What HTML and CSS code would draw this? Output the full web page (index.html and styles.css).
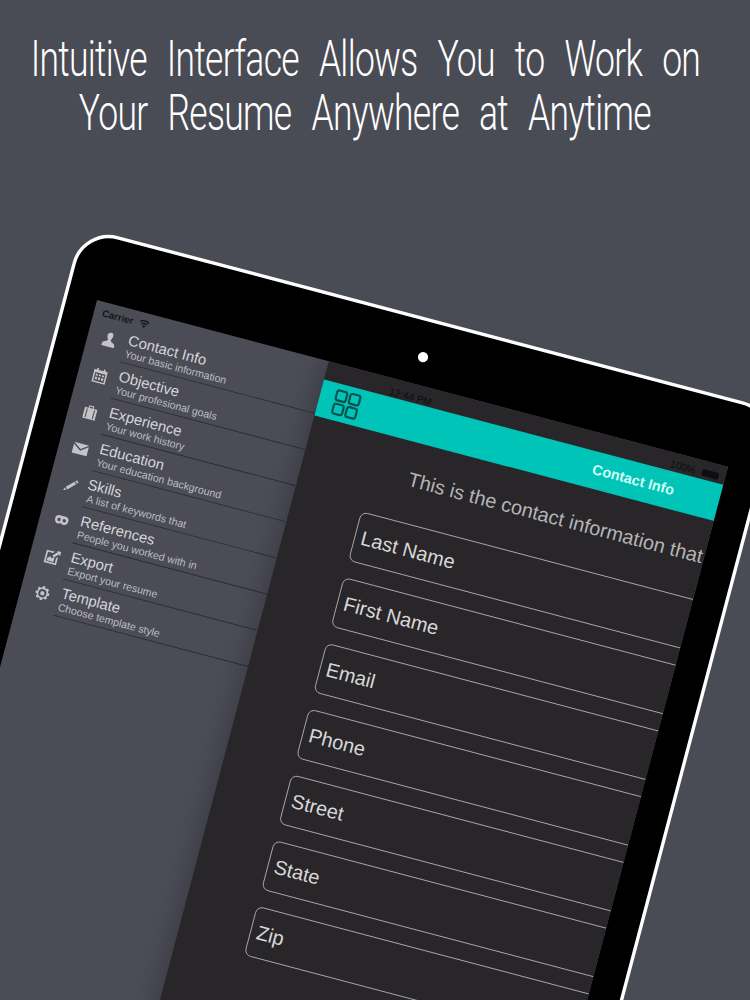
FILE: index.html
```html
<!DOCTYPE html>
<html lang="en">
<head>
<meta charset="utf-8">
<title>Resume app</title>
<link rel="stylesheet" href="styles.css">
</head>
<body>
<div class="page">
  <h1 class="headline">
    <span class="headline-line line-one">Intuitive Interface Allows You to Work on</span>
    <span class="headline-line line-two">Your Resume Anywhere at Anytime</span>
  </h1>
  <div class="device">
    <div class="camera"></div>
    <div class="screen">
      <aside class="sidebar">
        <div class="row">
          <svg class="icon" viewBox="0 0 20 20"><path d="M10.500 1c2.200 0 3 1.700 2.900 3.700-.1 1.900-.8 3.400-1.500 4.300-.2 1.200.2 2 1.400 2.600 1.800.8 3.900 1.600 4.200 3.600V18H2.500v-2.800c.3-2 2.400-2.800 4.200-3.600 1.200-.6 1.600-1.400 1.400-2.600-.7-.9-1.400-2.400-1.500-4.300C6.500 2.700 8.300 1 10.500 1z"/></svg>
          <div class="row-text"><div class="row-title">Contact Info</div><div class="row-sub">Your basic information</div></div>
        </div>
        <div class="row">
          <svg class="icon" viewBox="0 0 20 20"><path fill-rule="evenodd" d="M5 1h2v2h6V1h2v2h3v15H2V3h3zM3.800 6.500v10h12.400v-10zM5 8h2.500v2H5zm3.800 0h2.400v2H8.800zm3.700 0H15v2h-2.500zM5 11.500h2.500v3H5zm3.800 0h2.400v3H8.800zm3.700 0H15v3h-2.500z"/></svg>
          <div class="row-text"><div class="row-title">Objective</div><div class="row-sub">Your profesional goals</div></div>
        </div>
        <div class="row">
          <svg class="icon" viewBox="0 0 20 20"><path fill-rule="evenodd" d="M7 2h6v3h4.500v13h-15V5H7zm1.300 1.300V5h3.400V3.300zM5 6.200v10.600h1.200V6.200zm8.800 0v10.600H15V6.200z"/></svg>
          <div class="row-text"><div class="row-title">Experience</div><div class="row-sub">Your work history</div></div>
        </div>
        <div class="row">
          <svg class="icon" viewBox="0 0 20 20"><path d="M1 4h18L10 10.500zM1 6l9 6.500L19 6v11H1z"/></svg>
          <div class="row-text"><div class="row-title">Education</div><div class="row-sub">Your education background</div></div>
        </div>
        <div class="row">
          <svg class="icon" viewBox="0 0 20 20"><path d="M15.500 3l2.500 2.500-1.600 1.600-2.500-2.500zM13.100 5.400l2.500 2.500-8.500 8.500-2.500-2.500zM3.800 14.800l2.300 2.300-3.600 1.300z"/></svg>
          <div class="row-text row-text-tight"><div class="row-title">Skills</div><div class="row-sub">A list of keywords that</div></div>
        </div>
        <div class="row">
          <svg class="icon" viewBox="0 0 20 20"><path fill-rule="evenodd" d="M6.500 4h7c3 0 4.500 2 4.500 4.500S16.500 14 13.500 14c-1.500 0-2.500-1-3.500-1s-2 1-3.500 1C3.500 14 2 11 2 8.500S3.500 4 6.500 4zm.3 3a2 2 0 100 4 2 2 0 000-4zm6.400 0a2 2 0 100 4 2 2 0 000-4z"/></svg>
          <div class="row-text"><div class="row-title">References</div><div class="row-sub">People you worked with in</div></div>
        </div>
        <div class="row">
          <svg class="icon" viewBox="0 0 20 20"><path fill-rule="evenodd" d="M2 3h10l-2 2H4v11h11v-6l2-2v10H2zM14 1.500h5v5l-1.800-1.700-5 5-2-2 5-5zM5 12l3-2.500 2 2L13 9v6H5z"/></svg>
          <div class="row-text"><div class="row-title">Export</div><div class="row-sub">Export your resume</div></div>
        </div>
        <div class="row">
          <svg class="icon" viewBox="0 0 20 20"><path fill-rule="evenodd" d="M8.700 1.500h2.600l.4 1.800 1.600.7 1.600-1 1.900 1.900-1 1.600.7 1.600 1.800.4v2.600l-1.800.4-.7 1.600 1 1.600-1.900 1.900-1.600-1-1.600.7-.4 1.800H8.700l-.4-1.800-1.600-.7-1.600 1-1.900-1.900 1-1.600-.7-1.600-1.800-.4V8.700l1.800-.4.7-1.600-1-1.600 1.900-1.900 1.600 1 1.600-.7zM10 5.200a4.800 4.800 0 100 9.600 4.800 4.800 0 000-9.600zm0 2.300a2.500 2.500 0 110 5 2.500 2.500 0 010-5z"/></svg>
          <div class="row-text"><div class="row-title">Template</div><div class="row-sub">Choose template style</div></div>
        </div>
      </aside>
      <main class="main">
        <div class="main-inner">
          <div class="bar">
            <svg class="menu-icon" viewBox="0 0 32 32"><rect x="2" y="2" width="12" height="12" rx="2.500"/><rect x="18" y="2" width="12" height="12" rx="2.500"/><rect x="2" y="18" width="12" height="12" rx="2.500"/><rect x="18" y="18" width="12" height="12" rx="2.500"/></svg>
            <span class="bar-title">Contact Info</span>
          </div>
          <p class="intro">This is the contact information that</p>
          <div class="fields">
            <div class="field">Last Name</div>
            <div class="field">First Name</div>
            <div class="field">Email</div>
            <div class="field">Phone</div>
            <div class="field">Street</div>
            <div class="field">State</div>
            <div class="field">Zip</div>
          </div>
        </div>
      </main>
      <div class="status status-carrier">Carrier
        <svg class="wifi" viewBox="0 0 16 12"><path d="M8 11L5.800 8.300a3.500 3.500 0 014.400 0zM4.700 7.100L3.500 5.600a7 7 0 019 0l-1.200 1.500a5 5 0 00-6.600 0zM2.500 4.400L1.300 2.900a10.400 10.400 0 0113.400 0l-1.200 1.500a8.500 8.500 0 00-11 0z"/></svg>
      </div>
      <div class="status status-time">12:44 PM</div>
      <div class="status status-battery">100% <span class="battery"></span></div>
    </div>
  </div>
</div>
</body>
</html>
```
FILE: styles.css
```css
* { box-sizing: border-box; }
html, body { margin: 0; padding: 0; }
.page {
  position: relative;
  width: 750px;
  height: 1000px;
  overflow: hidden;
  background: #4a4c55;
  font-family: "Liberation Sans", Arial, sans-serif;
}
.headline {
  margin: 0;
  padding: 32px 20px 0 0;
  display: flex;
  flex-direction: column;
  align-items: center;
  color: #fff;
  font-family: Roboto, "Liberation Sans", sans-serif;
  font-size: 50px;
  font-weight: 300;
  line-height: 54px;
}
.headline-line { white-space: nowrap; word-spacing: 0.34em; letter-spacing: -0.02em; }
.line-one { transform: scaleX(0.71); }
.line-two { transform: scaleX(0.71); }
.device {
  position: absolute;
  left: 97px;
  top: 300px;
  width: 848px;
  height: 1170px;
  padding: 75px 42px 60px 35px;
  background: #000;
  border: 4px solid #fff;
  border-radius: 44px;
  transform-origin: 0 0;
  transform: rotate(14.8deg) scale(0.85) translate(-39px, -79px);
}
.camera {
  position: absolute;
  left: 417px;
  top: 36px;
  width: 12px;
  height: 12px;
  border-radius: 50%;
  background: #fff;
}
.screen {
  position: relative;
  display: flex;
  width: 768px;
  height: 1024px;
  overflow: hidden;
  background: #4b4c56;
}
.sidebar {
  flex: 0 0 282px;
  padding-top: 20px;
  color: #d6d6d9;
}
.row {
  display: flex;
  height: 44px;
}
.icon {
  flex: 0 0 20px;
  width: 20px;
  height: 20px;
  margin: 12px 9px 0 16px;
  fill: #c4c4c8;
}
.row-text {
  flex: 1;
  padding: 6px 0 0 3px;
  border-bottom: 1px solid #2c2c32;
  white-space: nowrap;
}
.row-text-tight .row-title { margin-left: -3px; }
.row-title { font-size: 17.500px; line-height: 20px; }
.row-sub { font-size: 12.500px; line-height: 13px; margin-top: 1px; color: #bdbdc1; }
.main {
  position: relative;
  flex: 1;
  overflow: hidden;
  background: #282629;
  box-shadow: -8px 0 22px rgba(30, 30, 34, 0.3);
  z-index: 1;
}
.main-inner { width: 768px; margin-left: -2px; padding-top: 22px; }
.bar {
  position: relative;
  display: flex;
  align-items: center;
  justify-content: center;
  height: 44px;
  background: #00c4b8;
}
.menu-icon {
  position: absolute;
  left: 19px;
  top: 6px;
  width: 32px;
  height: 32px;
  fill: none;
  stroke: #07514f;
  stroke-width: 2.600;
}
.bar-title { color: #d4fff6; font-size: 17px; font-weight: 700; }
.intro {
  margin: 30px 0 0 128px;
  color: #b4b4b6;
  font-size: 23.500px;
  line-height: 28px;
  white-space: nowrap;
}
.fields {
  display: flex;
  flex-direction: column;
  gap: 20px;
  margin: 37px 84px 0;
}
.field {
  display: flex;
  align-items: center;
  height: 60px;
  padding-left: 7px;
  border: 1.700px solid #b0b0b2;
  border-radius: 8px;
  color: #d8d8d8;
  font-size: 23.500px;
}
.status {
  position: absolute;
  z-index: 2;
  color: #161618;
  font-size: 12px;
  line-height: 14px;
  white-space: nowrap;
}
.status-carrier { left: 10px; top: 6px; display: flex; align-items: center; gap: 6px; font-weight: 700; font-size: 11.500px; }
.wifi { width: 14px; height: 11px; fill: #161618; }
.status-time { left: 360px; top: 9px; color: #0e0e10; }
.status-battery { right: 8px; top: 7px; display: flex; align-items: center; gap: 8px; color: #0e0e10; }
.battery { display: block; width: 20px; height: 8px; background: #0e0e10; border-radius: 2px; }
```
